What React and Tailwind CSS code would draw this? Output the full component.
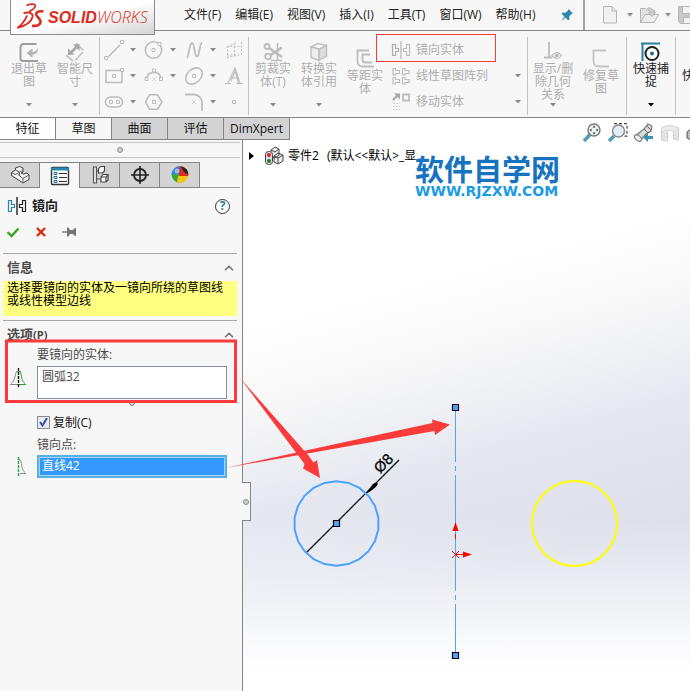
import { useState } from 'react';
import { ChevronUp } from 'lucide-react';

const menus = ['文件(F)', '编辑(E)', '视图(V)', '插入(I)', '工具(T)', '窗口(W)', '帮助(H)'];
const tabs = ['特征', '草图', '曲面', '评估', 'DimXpert'];

const Caret = ({ dark }) => (
  <svg width="6" height="4" viewBox="0 0 6 4" className={dark ? 'text-black' : 'text-[#8a8a8a]'}>
    <path d="M0 0h6L3 3.6z" fill="currentColor" />
  </svg>
);

const Svg = ({ size = 20, className = '', children, ...rest }) => (
  <svg width={size} height={size} viewBox={`0 0 ${size} ${size}`} fill="none" stroke="currentColor" className={`shrink-0 ${className}`} {...rest}>
    {children}
  </svg>
);

const Separator = () => <div className="w-px self-stretch bg-[#c3c3c3] shrink-0" />;

// Sketch entity icons, left to right and top to bottom
const sketchTools = [
  { name: '直线', caret: true, icon: <><path d="M4 17 16 5" strokeWidth="1.6" /><path d="M.5 16.5h3v3h-3zM16.5.5h3v3h-3z" fill="#f7f7f7" /></> },
  { name: '圆', caret: true, icon: <><circle cx="9.5" cy="10" r="8.2" strokeWidth="1.6" /><path d="M8 8.5h3v3H8zM14 2.5h3v3h-3z" fill="#f7f7f7" /></> },
  { name: '样条曲线', caret: true, icon: <path d="M3 17.5C5 17 5 3 8 3s2 13.5 5 13.5S15 4 18 2.5" strokeWidth="1.8" /> },
  { name: '基准面', icon: <path d="M3 6.5 13 3M3 18l10-3M3.5 6v12M17.5 2v13M10.5 3v14M3 6.5h15M3 15h14" strokeDasharray="2 1.5" /> },
  { name: '矩形', caret: true, icon: <><path d="M2 4.5h16v12H2z" strokeWidth="1.6" /><path d="M8.5 8.5h3v3h-3zM16.5 2.5h3v3h-3z" fill="#f7f7f7" /></> },
  { name: '圆弧', caret: true, icon: <><path d="M2.5 12a7.5 7.5 0 0 1 14.5 0" strokeWidth="1.6" /><path d="M1 11.5h3v3H1zM15.5 11.5h3v3h-3zM8.5 3h3v3h-3z" fill="#f7f7f7" /><path d="m8 11 4 4m0-4-4 4" strokeWidth=".5" /></> },
  { name: '椭圆', caret: true, icon: <><ellipse cx="10" cy="10" rx="9.5" ry="6.8" transform="rotate(-43 10 10)" strokeWidth="1.6" /><path d="M8.5 8.5h3v3h-3z" /></> },
  { name: '文字', icon: <path d="M1 17.5h6M12 17.5h7M4 17 11 2l5 15M6 12h8M11 5.5 7 15M10.5 2.5l4 14.5" strokeWidth="1.1" /> },
  { name: '槽口', caret: true, icon: <><rect x="1.5" y="5" width="17" height="10" rx="5" strokeWidth="1.6" /><path d="M5.5 8.5h3v3h-3zM12.5 8.5h3v3h-3z" /></> },
  { name: '多边形', icon: <><path d="m5.5 2.7 8 .1L18 10l-4.5 7.2h-8L1.5 10z" strokeWidth="1.6" /><path d="M8.5 8.5h3v3h-3z" /></> },
  { name: '圆角', caret: true, icon: <><path d="M1 2.5h9a8 8 0 0 1 8 8V19" strokeWidth="1.8" /><path d="m8 8 4 4m0-4-4 4" strokeWidth=".6" /></> },
  { name: '点', icon: <path d="M8.5 8.5h3v3h-3z" /> },
];

const ExitIcon = () => (
  <Svg>
    <path d="M17.5 2H4.5A3 3 0 0 0 1.5 5v11.5a2.5 2.5 0 0 0 2.5 2.5h15" stroke="#9d9d9d" strokeWidth="2" />
    <path d="M18.5 6c.8 4-1 6.5-5 6.5v3.5L7.5 11l6-4.5V10c2.5 0 4-1.5 5-4z" fill="#b5b5b5" stroke="none" />
  </Svg>
);
const DimensionIcon = () => (
  <Svg>
    <path d="M1 13l7 6M11 1.5l7 6.500M10 18.5 18 10" strokeWidth="1.8" stroke="#c4c4c4" />
    <path d="M6 10.5 12 4.5" stroke="#a8a8a8" strokeWidth="2.5" />
    <path d="M3 13V6.5l6.5 6zM14.5 2v7L8 2.5z" fill="#a8a8a8" stroke="none" />
  </Svg>
);
const TrimIcon = () => (
  <Svg stroke="#bcbcbc">
    <circle cx="4" cy="4.5" r="2.5" strokeWidth="1.8" />
    <circle cx="5" cy="14.5" r="2.8" strokeWidth="1.8" />
    <path d="M6 6 19 15M7.5 13 19 5.5" strokeWidth="2.5" />
    <path d="M14.5 1v18M8 18.5h11" strokeWidth="1.5" />
  </Svg>
);
const ConvertIcon = () => (
  <Svg stroke="#bfbfbf" strokeWidth="1.4">
    <path d="m2 5 7-3.5 8 2L10.5 7z" fill="#fafafa" />
    <path d="M2 5v10.5l8 3V7z" fill="#ededed" />
    <path d="M10 18.5 17.5 14V3.5L10.5 7z" fill="#ddd" />
  </Svg>
);
const OffsetIcon = () => (
  <Svg stroke="#bcbcbc" strokeWidth="1.8">
    <path d="M14 1.5H2.5v11a5 5 0 0 0 5 5H19" />
    <path d="M15 5.5H7.5v5a3 3 0 0 0 3 3H17" />
  </Svg>
);
const RelationIcon = () => (
  <Svg stroke="#bcbcbc">
    <path d="M6 0v15M1 15.5h8" strokeWidth="1.8" />
    <path d="M9 13.5q4.5-6 9.5 0-4.5 6-9.5 0z" fill="#f7f7f7" strokeWidth="1.2" />
    <circle cx="13.8" cy="13.5" r="2" fill="#bcbcbc" stroke="none" />
  </Svg>
);
const RepairIcon = () => (
  <Svg stroke="#c4c4c4" strokeWidth="1.8">
    <path d="M15 1.5H2.5v11a5 5 0 0 0 5 5H18" />
  </Svg>
);
const SnapIcon = () => (
  <Svg>
    <path d="M1.5 19V2M0 1.5h19" stroke="#2a7fa3" strokeWidth="2" />
    <circle cx="11" cy="11.5" r="6.5" stroke="#222" strokeWidth="2" fill="#fff" />
    <circle cx="11" cy="11.5" r="2" fill="#1d6f96" stroke="none" />
  </Svg>
);

const MirrorGlyph = ({ left = 'currentColor' }) => (
  <>
    <path d="M1.5 4.5h3v4h3v3h-3v4h-3z" stroke={left} strokeWidth="1.2" />
    <path d="M18.5 4.5h-3v4h-3v3h3v4h3z" strokeWidth="1.2" />
    <path d="M10 1v18" strokeWidth="1.4" />
  </>
);
const PatternGlyph = () => (
  <path d="M2 2.5h2.5v2h4v3h-4v1.500H2zM11.5 2.5H14v2h4v3h-4v1.500h-2.5zM2 11.5h2.5v2h4v3h-4V18H2zM11.5 11.5H14v2h4v3h-4V18h-2.5z" strokeWidth="1.2" />
);
const MoveGlyph = () => (
  <>
    <path d="m2 8 5-5" strokeWidth="2.2" stroke="#a5a5a5" />
    <path d="M3 1.5h6v6z" fill="#a5a5a5" stroke="none" />
    <path d="M12 2.5h6v6h-6z" strokeWidth="1.8" />
    <path d="M2 11.5h7M2 14.5h7M2 17.5h7" strokeDasharray="2 1" stroke="#d5d5d5" />
  </>
);

const RibbonButton = ({ icon, label, caret, active, low, wide }) => (
  <button
    type="button"
    className={`flex h-[78px] shrink-0 flex-col items-center pb-2 ${wide ? 'w-12' : 'w-[46px]'} ${low ? 'pt-3' : 'pt-[5px]'} ${active ? 'text-[#222]' : 'text-[#aeaeae]'}`}
  >
    {icon}
    <span className="whitespace-pre text-center text-xs leading-[13px]">{label}</span>
    {caret && <span className="mt-auto flex"><Caret dark={active} /></span>}
  </button>
);

const Logo = () => (
  <div className="absolute -top-px left-[10px] z-20 flex h-9 w-[145px] items-center border border-[#8c8c8c] bg-linear-to-br from-white via-white to-[#d4d4d4] pl-[5px] text-[#dc2a21]">
    <svg width="29" height="29" viewBox="0 0 29 29" fill="none" stroke="currentColor">
      <path d="M10.5 2.5C14 .8 19.5.3 19.3 3c-.2 2.2-3 4-6.3 5.8" strokeWidth="1.8" />
      <path d="M7.5 10.2C12 8.8 17.5 9.5 16.5 14c-1.2 5-8 9-15 10.8C5.5 22 9 17.5 11 12.5" strokeWidth="1.9" strokeLinejoin="bevel" />
      <path d="M27.5 8.5c-3-.6-7 0-7.3 2.6-.2 2.7 5.3 4.9 4.3 8.2-.9 3-4.5 3.9-8.5 3.4" strokeWidth="2.6" />
    </svg>
    <span className="ml-[3px] whitespace-nowrap text-base">
      <span className="font-['Liberation_Sans',sans-serif] font-bold italic">SOLID</span>
      <span className="font-light italic">WORKS</span>
    </span>
  </div>
);

const MenuBar = () => (
  <header className="relative flex h-[31px] items-center overflow-visible border-b border-[#858585] bg-[#f7f7f7]">
    <Logo />
    <nav className="flex shrink-0 items-center gap-[14px] pl-[184px] text-xs text-[#222]">
      {menus.map((menu) => (
        <button key={menu} type="button" className="whitespace-nowrap">{menu}</button>
      ))}
    </nav>
    <button type="button" aria-label="固定" className="ml-6 shrink-0 text-[#2c86ad]">
      <Svg size={14} stroke="none">
        <path d="M8.5 1 13 5.5l-1.5.5-2.3 2.3.3 3-1.5 1L5.5 9.5 1 13.5 4.5 8.5 1.5 5.8l1.2-1.3 3 .3L8 2.5z" fill="currentColor" />
      </Svg>
    </button>
    <div className="ml-auto flex h-full w-[107px] shrink-0 items-center gap-[6px] overflow-hidden border-l-2 border-[#a3a3a3] pl-4 text-[#b5b5b5]">
      <button type="button" aria-label="新建" className="shrink-0">
        <Svg>
          <path d="M2.5 1.5h8.500l4.500 4.500v12h-13z" fill="#f1f1f1" />
          <path d="M11 1.5V6h4.5" />
        </Svg>
      </button>
      <span className="shrink-0"><Caret /></span>
      <button type="button" aria-label="打开" className="shrink-0">
        <Svg>
          <path d="M1.5 17.5v-14h5l2 2h7v12z" fill="#e2e2e2" />
          <path d="M1.5 17.5 6 9.5h13.5l-4.5 8z" fill="#ededed" />
          <path d="M8 3.5c4-1.5 6 0 6.5 4h2l-3.5 4-3.5-4h2C11.5 5.5 10 4.5 8 3.5z" fill="#cfcfcf" />
        </Svg>
      </button>
      <span className="shrink-0"><Caret /></span>
      <button type="button" aria-label="保存" className="shrink-0">
        <Svg>
          <path d="M1.5 1.5h17v17h-15l-2-2z" fill="#c9c9c9" />
          <path d="M5.5 1.5h9v7h-9zM6.5 12.5h8v6h-8z" fill="#f2f2f2" />
        </Svg>
      </button>
    </div>
  </header>
);

const Ribbon = () => {
  const rows = [
    { label: '镜向实体', icon: <MirrorGlyph /> },
    { label: '线性草图阵列', icon: <PatternGlyph />, caret: true },
    { label: '移动实体', icon: <MoveGlyph />, caret: true },
  ];

  return (
    <div className="relative flex h-[87px] items-start overflow-hidden border-b border-[#858585] bg-[#f7f7f7] pt-[6px]">
      <div className="flex h-[78px] shrink-0 pl-[6px]">
        <RibbonButton icon={<ExitIcon />} label={'退出草\n图'} caret />
        <RibbonButton icon={<DimensionIcon />} label={'智能尺\n寸'} caret />
        <div className="w-px" />
        <Separator />
      </div>
      <div className="grid shrink-0 grid-cols-[40px_40px_40px_24px] pl-1 text-[#bdbdbd]">
        {sketchTools.map((tool) => (
          <div key={tool.name} className="flex h-[26px] items-center gap-[6px]">
            <button type="button" aria-label={tool.name}><Svg>{tool.icon}</Svg></button>
            {tool.caret && <Caret />}
          </div>
        ))}
      </div>
      <div className="flex h-[78px] shrink-0">
        <Separator />
        <div className="flex pl-px">
          <RibbonButton icon={<TrimIcon />} label={'剪裁实\n体(T)'} caret />
          <RibbonButton icon={<ConvertIcon />} label={'转换实\n体引用'} caret />
          <RibbonButton icon={<OffsetIcon />} label={'等距实\n体'} low />
        </div>
      </div>
      <div className="w-[139px] shrink-0 text-xs text-[#aeaeae]">
        {rows.map((row) => (
          <button key={row.label} type="button" className="flex h-[26px] w-full items-center gap-[5px] pl-[3px] pr-[6px]">
            <Svg stroke="#bdbdbd">{row.icon}</Svg>
            <span>{row.label}</span>
            {row.caret && <span className="ml-auto"><Caret /></span>}
          </button>
        ))}
      </div>
      <div className="flex h-[78px] shrink-0">
        <Separator />
        <div className="flex px-px">
          <RibbonButton icon={<RelationIcon />} label={'显示/删\n除几何\n关系'} caret wide />
          <RibbonButton icon={<RepairIcon />} label={'修复草\n图'} low wide />
        </div>
        <Separator />
        <RibbonButton icon={<SnapIcon />} label={'快速捕\n捉'} caret active wide />
        <Separator />
        <button type="button" className="w-12 pl-[6px] text-left text-xs text-[#222]">快速</button>
      </div>
      {/* highlighted command */}
      <div className="pointer-events-none absolute left-[376px] top-[3px] h-7 w-[120px] border border-[#f53b3b]" />
    </div>
  );
};

const ViewToolbar = () => (
  <div className="relative z-10 ml-auto flex h-7 w-[108px] shrink-0 gap-[6px] overflow-hidden pt-[5px]">
    <button type="button" aria-label="整屏显示全图" className="size-5 shrink-0">
      <Svg>
        <path d="m2 18 6-6.5" stroke="#4f9cc0" strokeWidth="3.5" />
        <circle cx="12" cy="7" r="6" stroke="#777" fill="#eef3f6" strokeWidth="1.4" />
        <path d="m12 2.5 1.5 2h-3zM12 11.5l1.5-2h-3zM7.5 7l2-1.5v3zM16.5 7l-2-1.5v3z" fill="#333" stroke="none" />
      </Svg>
    </button>
    <button type="button" aria-label="局部放大" className="size-5 shrink-0">
      <Svg>
        <path d="M6 .7h13v12.5h-4" stroke="#444" strokeDasharray="3 2" strokeWidth="1.2" />
        <path d="m1 18 5-5" stroke="#4f9cc0" strokeWidth="3.5" />
        <circle cx="10.5" cy="8" r="6" stroke="#888" fill="#e3edf3" strokeWidth="1.4" />
      </Svg>
    </button>
    <button type="button" aria-label="上一视图" className="size-5 shrink-0">
      <Svg>
        <path d="m1 13 9-7 4-5 4 2-1 5-5 3-6 7z" fill="#dcdcdc" stroke="#777" strokeWidth="1.2" />
        <path d="m10 6 4 4M13 3l4 4" stroke="#666" />
        <ellipse cx="4" cy="15" rx="2.5" ry="4" transform="rotate(-50 4 15)" fill="#eee" stroke="#777" />
        <path d="m9 14.5 5-4.5v3h5v3h-5v3z" fill="#3f8fb5" stroke="none" />
      </Svg>
    </button>
    <button type="button" aria-label="剖面视图" className="size-5 shrink-0">
      <Svg stroke="#cfcfcf">
        <path d="M1.5 5q8-5 17 0v12l-5-1V8q-4-2-6 0v10l-6-1z" fill="#ececec" />
        <path d="m2 10 5-4M2 14l5-4M2 17l5-4M14 9l4-3M14 13l4-3M14 16l4-3" />
      </Svg>
    </button>
    <button type="button" aria-label="视图定向" className="size-5 shrink-0">
      <Svg stroke="#555"><path d="m1 9 6-5 6 4v7l-6 3-6-3z" fill="#bbb" /></Svg>
    </button>
  </div>
);

const TabBar = ({ active, onChange }) => (
  <div className="flex h-[22px] bg-white">
    {tabs.map((tab) => (
      <button
        key={tab}
        type="button"
        onClick={() => onChange(tab)}
        className={`shrink-0 border-b border-r border-[#858585] text-xs text-[#111] ${tab === 'DimXpert' ? 'w-[66px]' : 'w-14'} ${tab === active ? 'bg-[#f7f7f7]' : tab === '特征' ? 'bg-white' : 'bg-[#d3d3d3]'}`}
      >
        {tab}
      </button>
    ))}
    <ViewToolbar />
  </div>
);

const managerTabs = [
  {
    name: '设计树',
    icon: <><path d="m1.5 7.5 4-2.500V3l4-1.5L13 3v4l-2 1 2.5 1L17 8l2 2v4.500L13 18 1.5 10.5z" fill="#f0f0f0" stroke="#444" /><path d="m5.5 5 4 2 3.5-1.5M9.5 7v4M1.5 7.5l3.5 2 4-2M13 18v-4.5l6-3.500M8 9.5l5 4" stroke="#666" /></>,
  },
  {
    name: '属性',
    icon: <><rect x="1.5" y="1.5" width="17" height="17" rx="1" fill="#fff" stroke="#333" strokeWidth="1.4" /><path d="M1 3h18" stroke="#2a86ae" strokeWidth="3" /><path d="M4 6.5h3v2H4zM4 10.5h3v2H4zM4 14.5h3v2H4z" stroke="#1d6f96" /><path d="M9 7.5h8M9 11.5h8M9 15.5h8" stroke="#333" /></>,
  },
  {
    name: '配置',
    icon: <><path d="M3.5 2h3v16h-3zM6.5 6h3M6.5 14h4" fill="#eee" stroke="#555" strokeWidth="1.2" /><path d="m8.5 4 2-2.500h4V6l-2 2h-4zM11 12l2-2.500h5V15l-2 2h-5zM11 12h5v5M16 12l2-2.500" fill="#fff" stroke="#444" strokeWidth="1.2" /></>,
  },
  {
    name: '标注专家',
    icon: <><circle cx="10" cy="10" r="6" stroke="#222" strokeWidth="1.8" /><path d="M10 1v18M1 10h18" stroke="#222" strokeWidth="1.6" /></>,
  },
  {
    name: '外观',
    icon: <g stroke="none"><path d="M10 9V1a9 9 0 0 0-8.5 9z" fill="#2c7be0" /><path d="M1.5 9.5 10 9l1 9A9 9 0 0 1 1.5 9.5z" fill="#34a63a" /><path d="M8 11h10.5A9 9 0 0 1 7 17.5z" fill="#f3c51b" /><path d="M9.5 1A9 9 0 0 1 18.5 11H9z" fill="#d92b20" /><path d="M11 1.5a9 9 0 0 1 7.5 8L14 7z" fill="#222" /><circle cx="7" cy="6" r="2.5" fill="#fff" opacity=".5" /></g>,
  },
];

const SectionTitle = ({ children }) => (
  <div className="flex items-center justify-between pl-1 pr-px text-[13px] font-bold leading-[27px] text-[#4a4a4a]">
    <h3>{children}</h3>
    <ChevronUp size={14} strokeWidth={3} className="text-[#777]" />
  </div>
);

const Grip = () => <span className="block size-[6px] shrink-0 rounded-full border border-[#8b8b8b] bg-[#d0d0d0]" />;

const PropertyPanel = () => {
  const [copy, setCopy] = useState(true);

  return (
    <aside className="relative w-[243px] shrink-0 border-r border-[#858585] bg-[#f7f7f7]">
      <div className="mr-[2px] mt-[2px] flex h-4 items-center justify-center border-y border-[#c3c3c3]">
        <Grip />
      </div>
      <div className="mr-[2px] mt-1 flex h-[26px] border-b border-[#9b9b9b]">
        {managerTabs.map((tab) => (
          <button
            key={tab.name}
            type="button"
            aria-label={tab.name}
            className={`flex h-[26px] w-10 items-center justify-center border-r border-t border-[#858585] ${tab.name === '属性' ? 'bg-[#f7f7f7]' : 'border-b bg-[#d3d3d3]'}`}
          >
            <Svg>{tab.icon}</Svg>
          </button>
        ))}
      </div>

      <div className="flex h-9 items-center pl-[7px] pr-3 text-[#222]">
        <Svg><MirrorGlyph left="#2a86ae" /></Svg>
        <h2 className="ml-[5px] text-[13px] font-bold">镜向</h2>
        <button type="button" aria-label="帮助" className="ml-auto flex size-[15px] items-center justify-center rounded-full border border-[#333] bg-white text-xs font-bold text-[#2a7fa3]">?</button>
      </div>
      <div className="flex h-[29px] items-start gap-[14px] pl-[6px] pt-px">
        <button type="button" aria-label="确定">
          <Svg size={14}><path d="m1.5 7 4 4 7-7.5" stroke="#36a61c" strokeWidth="2.4" /></Svg>
        </button>
        <button type="button" aria-label="取消">
          <Svg size={14}><path d="m3 3 8 8m0-8-8 8" stroke="#dc2a10" strokeWidth="2.4" /></Svg>
        </button>
        <button type="button" aria-label="保持可见">
          <Svg size={14}><path d="M0 7h6" stroke="#777" strokeWidth="1.4" /><path d="M5 2.5h1.5L8 5h3l2-2h1v8h-1l-2-2H8l-1.5 2.500H5z" fill="#777" stroke="none" /></Svg>
        </button>
      </div>

      <section className="ml-[3px] mr-[5px] border-t border-[#a9a9a9]">
        <SectionTitle>信息</SectionTitle>
        <p className="h-[35px] bg-[#ffff80] pl-1 pr-2 text-xs leading-[13px] text-black">选择要镜向的实体及一镜向所绕的草图线或线性模型边线</p>
      </section>

      <section className="ml-[3px] mr-[5px] mt-1 border-t border-[#a9a9a9]">
        <SectionTitle>选项<span className="text-[11px]">(P)</span></SectionTitle>
        <div className="grid grid-cols-[34px_1fr] pr-[10px] text-xs leading-[13px] text-[#4a4a4a]">
          <label htmlFor="entities" className="col-start-2">要镜向的实体:</label>
          <Svg stroke="#888" className="col-start-1 ml-[6px] mt-[6px]">
            <path d="M1 17.5h8M2 16.5C6 14 6 8 7.5 4.5H10" />
            <path d="M17 17.5h-7M16 16.5c-3.5-2.5-3.5-8-4.5-12H9" stroke="#27a52c" />
            <path d="M9.5 1v19" stroke="#111" strokeDasharray="3 1" strokeWidth="1.4" />
          </Svg>
          <textarea
            id="entities"
            readOnly
            rows={2}
            defaultValue="圆弧32"
            className="mt-[5px] h-[33px] w-full resize-none border border-[#8590a8] bg-white px-1 py-[3px] leading-[13px] outline-none"
          />
          <div className="col-start-2 flex justify-center pt-px"><Grip /></div>
          <label className="col-start-2 mt-[10px] flex items-center gap-[3px] text-[#111]">
            <input
              type="checkbox"
              checked={copy}
              onChange={(e) => setCopy(e.target.checked)}
              className="peer size-[13px] appearance-none border border-[#8b8b8b] bg-[#e6e9f2]"
            />
            <span className="pointer-events-none -ml-4 hidden w-[13px] justify-center text-[#33539c] peer-checked:flex">
              <Svg size={9}><path d="m1 4 2.5 3.5L8 0" strokeWidth="2" /></Svg>
            </span>
            复制(C)
          </label>
          <label htmlFor="mirror-line" className="col-start-2 mt-[9px]">镜向点:</label>
          <Svg stroke="#888" className="col-start-1 ml-[6px] mt-[5px]">
            <path d="M17 17.5h-6M16 16.5c-4-3-2.5-8-4.5-12.500H9.5" />
            <path d="M9.5 1v19" stroke="#27a52c" strokeDasharray="3 1" strokeWidth="1.4" />
          </Svg>
          <input
            id="mirror-line"
            readOnly
            defaultValue="直线42"
            className="mt-1 h-[23px] w-full border-2 border-[#56b0e6] bg-[#3399ff] px-[3px] pb-1 text-white shadow-[inset_0_0_0_1px_#a9d7f5] outline-none"
          />
        </div>
      </section>

      {/* splitter handle */}
      <div className="absolute left-[242px] top-[342px] z-10 flex h-[39px] w-[9px] items-center justify-center border border-l-0 border-[#858585] bg-[#f7f7f7]">
        <Grip />
      </div>
    </aside>
  );
};

const facets = Array.from({ length: 22 }, (_, i) => {
  const a = ((i + 0.5) / 22) * Math.PI * 2;
  return `${336.5 + 42.3 * Math.cos(a)},${523.5 + 42.3 * Math.sin(a)}`;
}).join(' ');

const Canvas = () => (
  <section className="relative min-w-0 flex-1 overflow-hidden bg-[linear-gradient(to_bottom,transparent_68%,#ffffff66_80%,#ffffffcc_90%,#fff_97%),linear-gradient(165deg,#fff_28%,#f7f7f8_41%,#e5e8f0_56%,#dde0eb_74%)]">
    <svg width="447" height="551" viewBox="243 140 447 551" className="absolute left-0 top-0" fill="none">
      <path d="M455.5 408v54M455.5 466v5M455.5 475v116M455.5 595v5M455.5 604v52" stroke="#55a2fb" />
      <path d="M306 553 399 460" stroke="#000" strokeWidth="1.2" />
      <path d="m366 494 6.5-9.5q3-3 5.5-1-1 4-12 10.5z" fill="#000" />
      <polygon points={facets} stroke="#4ba3ff" strokeWidth="2" />
      <circle cx="574.5" cy="523.5" r="42.5" stroke="#ff0" strokeWidth="2" />
      <text x="380" y="474" transform="rotate(-45 380 474)" className="font-['Liberation_Sans',sans-serif] text-[15px]" fill="#000" stroke="#000" strokeWidth=".3">Ø8</text>
      <g fill="#55a2fb" stroke="#000" strokeWidth="1.2">
        <path d="M452.5 404.5h6v6h-6zM452.5 652.5h6v6h-6zM333.5 520.5h6v6h-6z" />
      </g>
      <path d="M455.5 554.5H464M455.5 534v5M452 551l7 7m0-7-7 7" stroke="#f00" />
      <path d="m455.5 522 3 9h-6zM472 554.5l-9 3v-6z" fill="#f00" />
    </svg>
    <div className="flex items-center whitespace-nowrap pl-[6px] pt-[6px] text-xs text-black">
      <svg width="5" height="8" viewBox="0 0 5 8"><path d="M0 0v8l5-4z" /></svg>
      <span className="ml-[10px] mr-1">
        <Svg stroke="#444">
          <path d="m7 4 4-3 4 2v6l-4 3-4-2zM10 10l4-3 5 2v6l-5 3-4-2z" fill="#eee" />
          <path d="m10 10 4 2 5-3M14 12v6M7 4l4 2 4-3" />
          <rect x="1.5" y="5.5" width="7" height="13" rx="3" fill="#ddd" />
          <circle cx="5" cy="9" r="2" fill="#d22" stroke="none" />
          <circle cx="5" cy="15" r="2" fill="#187a2c" stroke="none" />
        </Svg>
      </span>
      <span>零件2</span>
      <span className="ml-2">(默认&lt;&lt;默认&gt;_显</span>
    </div>
    <div className="absolute left-[172px] top-[14px] whitespace-nowrap text-[29px] font-bold leading-8 text-[#1673c0]">
      软件自学网
      <div className="font-['DejaVu_Sans',sans-serif] text-[14px] font-bold leading-[10px] text-[#1a9be6]">WWW.RJZXW.COM</div>
    </div>
  </section>
);

const Annotations = () => (
  <svg width="690" height="551" viewBox="0 140 690 551" className="pointer-events-none absolute left-0 top-0 z-20" fill="#fb3b3b">
    <rect x="6.5" y="341" width="229" height="60.5" fill="none" stroke="#fb3b3b" strokeWidth="3" />
    <path d="m240 378 59 78.5 5.5 7.5-1.5 4.5 17 9.5-3-18-3.500 2.500-5-7z" />
    <path d="m225 468 207.5-45-.5-3.5 18 5-15 10.5-.5-4z" />
  </svg>
);

const App = () => {
  const [activeTab, setActiveTab] = useState('草图');

  return (
    <div className="flex min-h-screen flex-col overflow-hidden bg-white font-['Open_Sans','Noto_Sans_CJK_SC',sans-serif]">
      <MenuBar />
      <Ribbon />
      <TabBar active={activeTab} onChange={setActiveTab} />
      <main className="relative flex flex-1">
        <PropertyPanel />
        <Canvas />
        <Annotations />
      </main>
    </div>
  );
};

export default App;
